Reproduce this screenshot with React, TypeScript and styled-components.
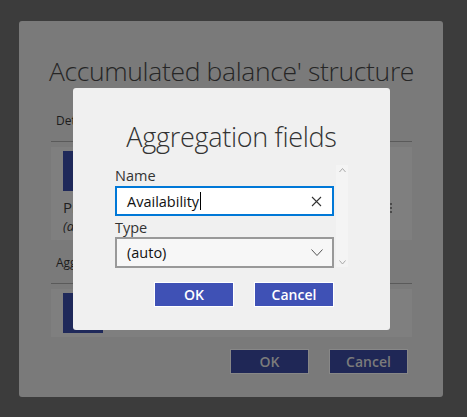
import React from "react";
import styled, { createGlobalStyle } from "styled-components";

const Global = createGlobalStyle`
  html, body { margin: 0; padding: 0; }
  body {
    background: #3c3c3c;
    width: 467px;
    height: 417px;
    overflow: hidden;
    font-family: "Open Sans", "Noto Sans", "Liberation Sans", sans-serif;
  }
`;

const Stage = styled.div`
  position: relative;
  width: 467px;
  height: 417px;
  padding: 21px 0 0 19px;
  box-sizing: border-box;
`;

const BackDialog = styled.div`
  width: 424px;
  height: 376px;
  background: #7a7a7a;
  border-radius: 3px;
  box-sizing: border-box;
  padding: 32px 31px 0 32px;
  display: flex;
  flex-direction: column;
`;

const BackTitle = styled.h1`
  margin: 0 -20px;
  font-weight: 300;
  font-size: 26.5px;
  line-height: 36px;
  color: #262626;
  text-align: center;
  white-space: nowrap;
  letter-spacing: -0.35px;
`;

const SectionLabel = styled.div<{ $top: number }>`
  margin-top: ${(p) => p.$top}px;
  padding-left: 5px;
  font-size: 12px;
  line-height: 16px;
  color: #1c1c1c;
  height: 16px;
  border-bottom: 1px solid #5a5a5a;
  padding-bottom: 12px;
`;

const Panel = styled.div<{ $height: number }>`
  margin-top: 5px;
  height: ${(p) => p.$height}px;
  background: #7f7f7f;
  padding: 4px 12px 0;
  box-sizing: border-box;
  position: relative;
`;

const Swatch = styled.div`
  width: 40px;
  height: 40px;
  background: #1f295a;
`;

const PanelName = styled.div`
  margin-top: 6px;
  font-size: 15px;
  line-height: 20px;
  color: #202020;
`;

const PanelSub = styled.div`
  font-size: 13px;
  line-height: 18px;
  font-style: italic;
  color: #202020;
`;

const MenuDots = styled.div`
  position: absolute;
  right: 20px;
  top: 56px;
  display: flex;
  flex-direction: column;
  gap: 2px;
  span {
    width: 2px;
    height: 2px;
    background: #4a4a4a;
  }
`;

const ButtonRow = styled.div<{ $pad: number }>`
  display: flex;
  justify-content: flex-end;
  gap: 20px;
  margin-top: 12px;
  padding-right: ${(p) => p.$pad}px;
`;

const DimButton = styled.div`
  width: 79px;
  height: 25px;
  box-sizing: border-box;
  background: #1f2756;
  border: 1px solid #878787;
  color: #7b7b7b;
  font-weight: 600;
  font-size: 14px;
  display: flex;
  align-items: center;
  justify-content: center;
`;

const Modal = styled.div`
  position: absolute;
  left: 73px;
  top: 88px;
  width: 317px;
  height: 242px;
  background: #f0f0f0;
  border-radius: 3px;
  box-sizing: border-box;
  padding: 31px 0 0 42px;
  display: flex;
  flex-direction: column;
`;

const ModalTitle = styled.h2`
  margin: 0 0 0 -42px;
  font-weight: 300;
  font-size: 27px;
  line-height: 36px;
  color: #333333;
  text-align: center;
  letter-spacing: -0.3px;
`;

const FormArea = styled.div`
  margin-top: 11px;
  display: flex;
  align-items: flex-start;
  gap: 2px;
`;

const Fields = styled.div`
  width: 219px;
  display: flex;
  flex-direction: column;
`;

const FieldLabel = styled.div<{ $top?: number; $h?: number }>`
  margin-top: ${(p) => p.$top ?? 0}px;
  font-size: 14.5px;
  line-height: ${(p) => p.$h ?? 20}px;
  height: ${(p) => p.$h ?? 20}px;
  color: #333333;
`;

const TextBox = styled.div`
  height: 30px;
  box-sizing: border-box;
  border: 2px solid #0078d7;
  background: #ffffff;
  display: flex;
  align-items: center;
  padding: 0 10px;
  font-size: 14.5px;
  color: #111111;
`;

const Caret = styled.span`
  display: inline-block;
  width: 1px;
  height: 18px;
  background: #000;
  margin-left: 1px;
`;

const Grow = styled.div`
  flex: 1;
  display: flex;
  align-items: center;
`;

const SelectBox = styled.div`
  height: 31px;
  box-sizing: border-box;
  border: 2px solid #999999;
  background: #f7f7f7;
  display: flex;
  align-items: center;
  padding: 0 9px 0 10px;
  font-size: 14.5px;
  color: #111111;
`;

const ScrollStrip = styled.div`
  margin-top: -1px;
  width: 12px;
  height: 102px;
  background: #f4f4f4;
  display: flex;
  flex-direction: column;
  justify-content: space-between;
  align-items: center;
  padding: 3px 0;
  box-sizing: border-box;
`;

const ModalButtons = styled.div`
  margin-top: 14px;
  width: 219px;
  display: flex;
  justify-content: flex-end;
  gap: 20px;
`;

const PrimaryButton = styled.div`
  width: 80px;
  height: 25px;
  box-sizing: border-box;
  background: #3f51b5;
  border: 1px solid #ffffff;
  color: #ffffff;
  font-weight: 600;
  font-size: 14px;
  display: flex;
  align-items: center;
  justify-content: center;
`;

const ClearIcon = () => (
  <svg width="11" height="11" viewBox="0 0 11 11">
    <path d="M1 1 L10 10 M10 1 L1 10" stroke="#333" strokeWidth="1.1" fill="none" />
  </svg>
);

const Chevron = ({ up, size, color }: { up?: boolean; size: number; color: string }) => (
  <svg width={size} height={size / 2 + 1} viewBox={`0 0 ${size} ${size / 2 + 1}`}>
    <path
      d={up ? `M0.5 ${size / 2 + 0.5} L${size / 2} 0.5 L${size - 0.5} ${size / 2 + 0.5}` : `M0.5 0.5 L${size / 2} ${size / 2 + 0.5} L${size - 0.5} 0.5`}
      stroke={color}
      strokeWidth="1"
      fill="none"
    />
  </svg>
);

export default function App() {
  return (
    <>
      <Global />
      <Stage>
        <BackDialog>
          <BackTitle>Accumulated balance' structure</BackTitle>
          <SectionLabel $top={24}>Details</SectionLabel>
          <Panel $height={93}>
            <Swatch />
            <PanelName>Properties</PanelName>
            <PanelSub>(auto)</PanelSub>
            <MenuDots>
              <span />
              <span />
              <span />
            </MenuDots>
          </Panel>
          <SectionLabel $top={15}>Aggregation fields</SectionLabel>
          <Panel $height={48}>
            <Swatch />
          </Panel>
          <ButtonRow $pad={4}>
            <DimButton>OK</DimButton>
            <DimButton>Cancel</DimButton>
          </ButtonRow>
        </BackDialog>

        <Modal>
          <ModalTitle>Aggregation fields</ModalTitle>
          <FormArea>
            <Fields>
              <FieldLabel>Name</FieldLabel>
              <TextBox>
                <Grow>
                  Availability
                  <Caret />
                </Grow>
                <ClearIcon />
              </TextBox>
              <FieldLabel $top={3} $h={18}>Type</FieldLabel>
              <SelectBox>
                <Grow>(auto)</Grow>
                <Chevron size={12} color="#555" />
              </SelectBox>
            </Fields>
            <ScrollStrip>
              <Chevron up size={7} color="#a8a8a8" />
              <Chevron size={7} color="#a8a8a8" />
            </ScrollStrip>
          </FormArea>
          <ModalButtons>
            <PrimaryButton>OK</PrimaryButton>
            <PrimaryButton>Cancel</PrimaryButton>
          </ModalButtons>
        </Modal>
      </Stage>
    </>
  );
}
